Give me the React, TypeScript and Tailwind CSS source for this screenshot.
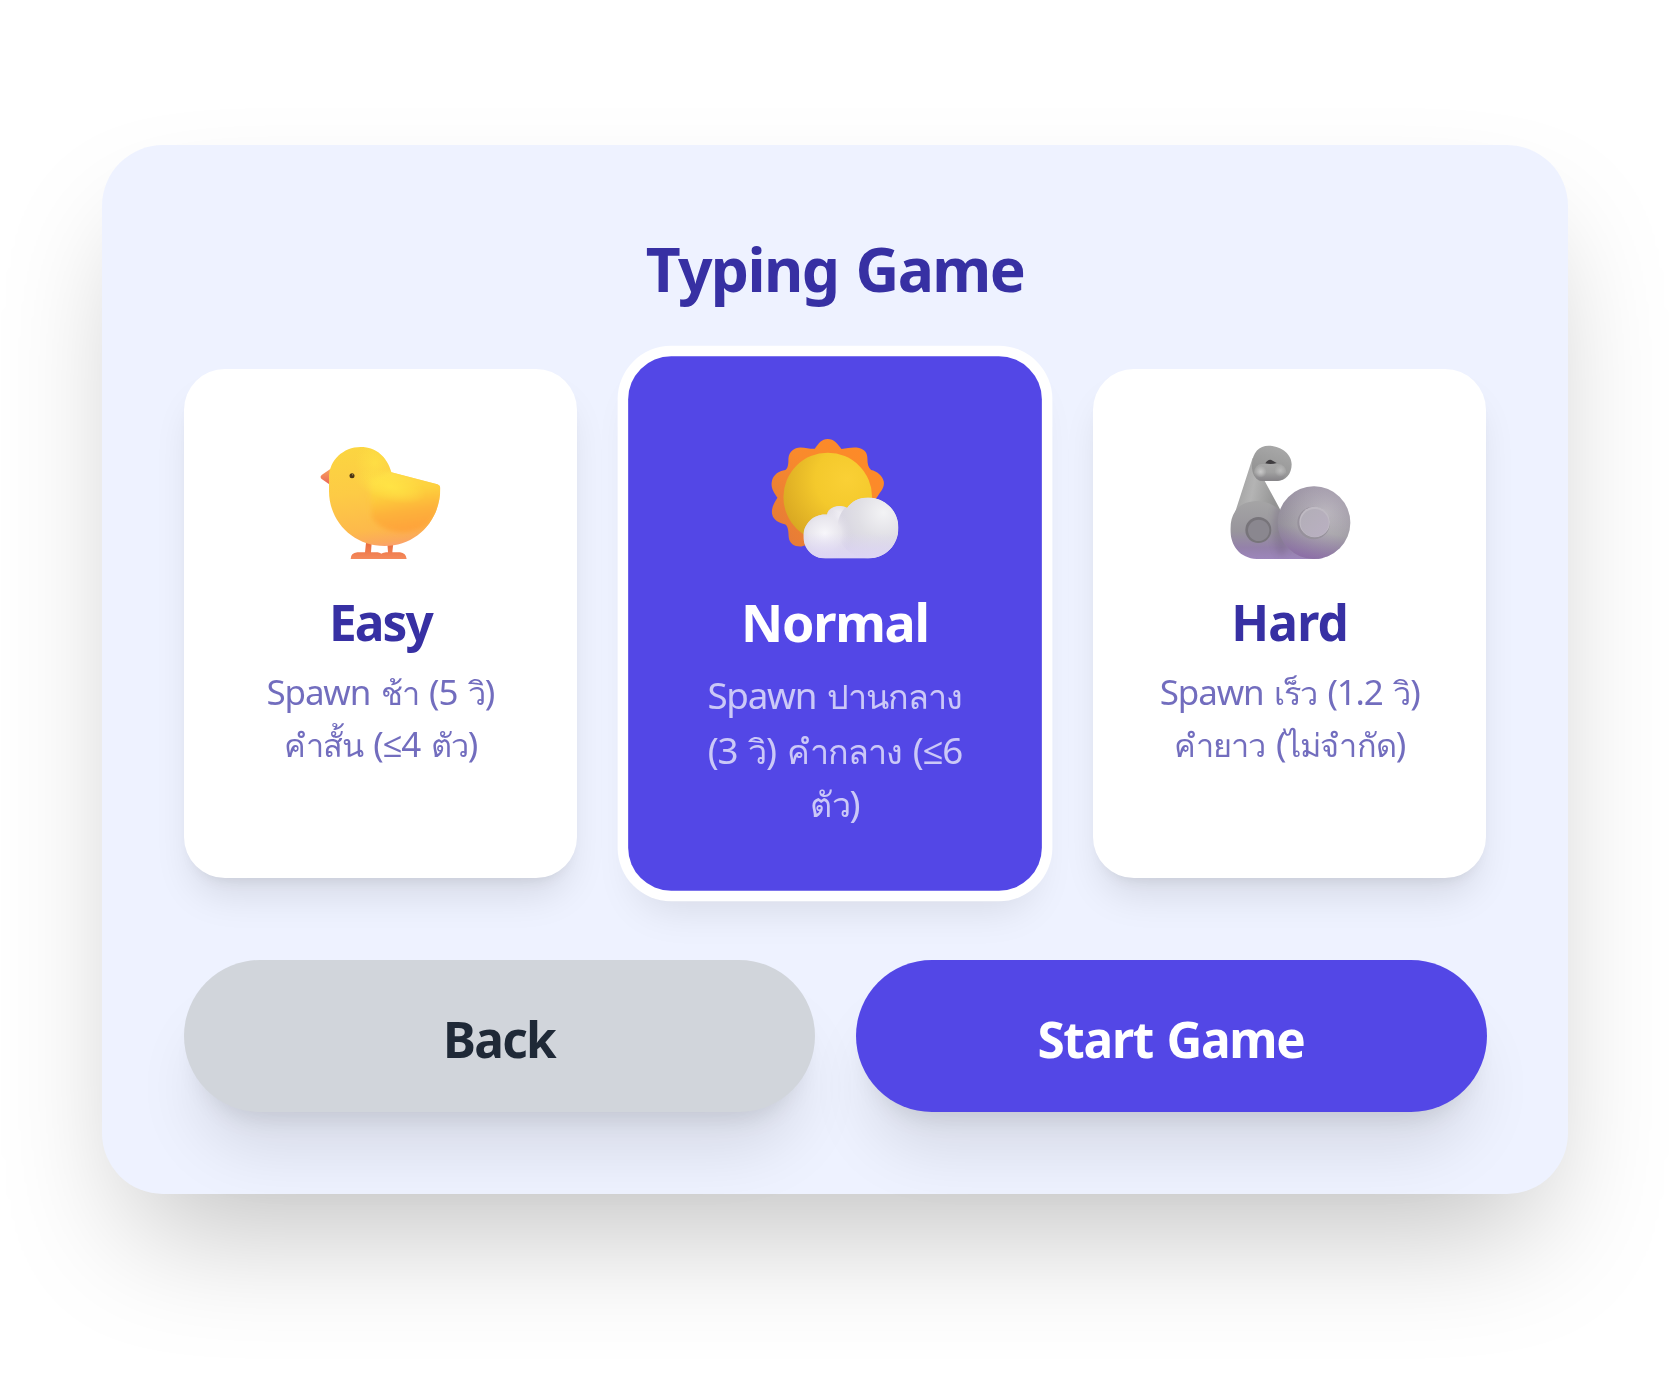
import React from "react";

const Chick = () => (
  <svg viewBox="0 0 480 480" className="block size-[160px]">
    <defs>
      <linearGradient id="ckBody" x1="0.35" y1="0" x2="0.5" y2="1">
        <stop offset="0" stopColor="#fbd640" />
        <stop offset="0.45" stopColor="#fdcb45" />
        <stop offset="0.8" stopColor="#fdb94b" />
        <stop offset="0.92" stopColor="#fba95c" />
        <stop offset="1" stopColor="#fb9a7c" />
      </linearGradient>
      <linearGradient id="ckWing" x1="0.4" y1="0" x2="0.58" y2="1">
        <stop offset="0" stopColor="#ffe14a" />
        <stop offset="0.35" stopColor="#fdd03c" />
        <stop offset="0.65" stopColor="#fdb23a" />
        <stop offset="1" stopColor="#fea03a" />
      </linearGradient>
      <radialGradient id="ckGlow">
        <stop offset="0" stopColor="#ffe345" />
        <stop offset="1" stopColor="#ffe345" stopOpacity="0" />
      </radialGradient>
      <linearGradient id="ckBeak" x1="0" y1="0" x2="0" y2="1">
        <stop offset="0" stopColor="#f9a05c" />
        <stop offset="1" stopColor="#e9675a" />
      </linearGradient>
      <linearGradient id="ckLeg" x1="0" y1="0" x2="0" y2="1">
        <stop offset="0" stopColor="#e96a3c" />
        <stop offset="1" stopColor="#f48a5c" />
      </linearGradient>
      <filter id="ckSoft" x="-20%" y="-20%" width="140%" height="140%">
        <feGaussianBlur stdDeviation="8" />
      </filter>
      <clipPath id="ckClip">
        <path d="M87 170C87 118 130 78 182 78C228 78 262 108 274 154L412 190Q421 193 421 202C421 300 348 375 254 375C160 375 87 302 87 210Z" />
      </clipPath>
    </defs>
    <path d="M92 143L66 161Q58 167 65 174L90 191Z" fill="url(#ckBeak)" />
    <path d="M198 365H215L213 394H233Q250 396 250 414H152Q152 396 172 394H195Z" fill="url(#ckLeg)" />
    <path d="M262 365H280L277 394H300Q318 396 320 414H234Q236 396 258 394H264Z" fill="url(#ckLeg)" />
    <g clipPath="url(#ckClip)">
      <rect x="60" y="60" width="380" height="330" fill="url(#ckBody)" />
      <path d="M215 290C240 335 320 345 370 320C410 300 425 250 425 190L270 150L210 180Z" fill="url(#ckWing)" filter="url(#ckSoft)" />
      <ellipse cx="270" cy="195" rx="110" ry="46" transform="rotate(16 270 195)" fill="url(#ckGlow)" />
      <ellipse cx="225" cy="125" rx="60" ry="70" fill="url(#ckGlow)" opacity="0.7" />
    </g>
    <circle cx="156" cy="164" r="7.5" fill="#4a3414" />
    <circle cx="158" cy="161" r="2.2" fill="#a58a45" />
  </svg>
);

const SunCloud = () => (
  <svg viewBox="0.75 -30.6 504 504" className="block size-[160px]">
    <defs>
      <linearGradient id="scRay" x1="1" y1="0" x2="0" y2="0.9">
        <stop offset="0" stopColor="#ff8a26" />
        <stop offset="0.5" stopColor="#f98a2c" />
        <stop offset="1" stopColor="#e47a38" />
      </linearGradient>
      <radialGradient id="scSun" cx="0.72" cy="0.3" r="0.8">
        <stop offset="0" stopColor="#fad035" />
        <stop offset="0.45" stopColor="#f4c92c" />
        <stop offset="1" stopColor="#d9a822" />
      </radialGradient>
      <radialGradient id="scLeft" cx="0.48" cy="0.42" r="0.6">
        <stop offset="0" stopColor="#f8f7fb" />
        <stop offset="0.6" stopColor="#e5e3ea" />
        <stop offset="1" stopColor="#dcd9e6" />
      </radialGradient>
      <radialGradient id="scRight" cx="0.75" cy="0.25" r="0.85">
        <stop offset="0" stopColor="#f3f3f5" />
        <stop offset="0.5" stopColor="#e0dfe5" />
        <stop offset="1" stopColor="#d4d1df" />
      </radialGradient>
      <linearGradient id="scBase" x1="0" y1="0" x2="0" y2="1">
        <stop offset="0.6" stopColor="#ddd6f5" stopOpacity="0" />
        <stop offset="1" stopColor="#ddd5f6" />
      </linearGradient>
      <radialGradient id="scLeftFade" gradientUnits="userSpaceOnUse" cx="222" cy="338" r="82">
        <stop offset="0" stopColor="#f8f7fb" />
        <stop offset="0.6" stopColor="#e9e7ee" stopOpacity="0.9" />
        <stop offset="1" stopColor="#dddae6" stopOpacity="0" />
      </radialGradient>
      <clipPath id="scCloud">
        <path d="M224 412C186 412 158 384 158 345C158 308 188 280 222 280L229 280C232 262 250 255 266 255Q280 254 289 261C302 241 326 229 352 229C403 229 443 270 443 320C443 372 405 412 352 412Z" />
      </clipPath>
    </defs>
    <path
      d="M192 83C204 67 212 54 231 54S260 68 272 84C292 82 306 77 325 81C344 86 350 98 350 114C350 128 352 139 361 147C378 151 395 163 399 181C402 199 389 212 378 229L300 330L152 376C131 377 116 367 114 349C113 332 113 318 104 310C84 305 68 298 64 279C61 261 70 246 80 230C69 214 60 201 63 183C67 160 84 151 104 147C113 139 113 126 113 112C115 91 130 80 149 79C166 79 178 84 192 83Z"
      fill="url(#scRay)"
    />
    <circle cx="231" cy="228" r="133" fill="url(#scSun)" />
    <g clipPath="url(#scCloud)">
      <rect x="150" y="220" width="300" height="200" fill="#dddbe3" />
      <circle cx="266" cy="294" r="39" fill="url(#scLeft)" />
      <circle cx="352" cy="320" r="92" fill="url(#scRight)" />
      <circle cx="224" cy="346" r="82" fill="url(#scLeftFade)" />
      <rect x="150" y="220" width="300" height="192" fill="url(#scBase)" />
    </g>
  </svg>
);

const Arm = () => (
  <svg viewBox="0 0 480 480" className="block size-[160px]">
    <defs>
      <linearGradient id="amFore" x1="0" y1="0" x2="1" y2="0.25">
        <stop offset="0" stopColor="#999" />
        <stop offset="0.5" stopColor="#b4b4b4" />
        <stop offset="1" stopColor="#939393" />
      </linearGradient>
      <linearGradient id="amElbow" x1="0" y1="0" x2="0" y2="1">
        <stop offset="0" stopColor="#a6a6a6" />
        <stop offset="0.55" stopColor="#98959c" />
        <stop offset="0.82" stopColor="#9481aa" />
        <stop offset="1" stopColor="#9d86bb" />
      </linearGradient>
      <radialGradient id="amBall" cx="0.66" cy="0.36" r="0.72">
        <stop offset="0" stopColor="#bebcbf" />
        <stop offset="0.5" stopColor="#a9a6ac" />
        <stop offset="1" stopColor="#908b97" />
      </radialGradient>
      <linearGradient id="amBallLow" x1="0.6" y1="0" x2="0.4" y2="1">
        <stop offset="0" stopColor="#9b7fb5" stopOpacity="0.2" />
        <stop offset="0.6" stopColor="#8d6fab" stopOpacity="0" />
        <stop offset="1" stopColor="#8a62ad" stopOpacity="0.75" />
      </linearGradient>
      <linearGradient id="amHand" x1="0.7" y1="0" x2="0.3" y2="1">
        <stop offset="0" stopColor="#a9a9a9" />
        <stop offset="1" stopColor="#8f8f8f" />
      </linearGradient>
      <linearGradient id="amFinger" x1="0" y1="0" x2="0" y2="1">
        <stop offset="0" stopColor="#a8a8a8" />
        <stop offset="0.5" stopColor="#a0a0a0" />
        <stop offset="1" stopColor="#858387" />
      </linearGradient>
      <radialGradient id="amShine">
        <stop offset="0" stopColor="#c9c9c9" />
        <stop offset="1" stopColor="#c9c9c9" stopOpacity="0" />
      </radialGradient>
      <linearGradient id="amHub" x1="0" y1="0" x2="1" y2="1">
        <stop offset="0" stopColor="#b2aeb7" />
        <stop offset="1" stopColor="#bab0c2" />
      </linearGradient>
      <filter id="amSoft" x="-50%" y="-50%" width="200%" height="200%">
        <feGaussianBlur stdDeviation="10" />
      </filter>
      <clipPath id="amLower">
        <path d="M76 270C92 246 120 240 145 240C172 242 195 252 210 270L270 300L340 411L326 414H140C90 412 61 375 61 325Q61 292 76 270Z" />
      </clipPath>
    </defs>
    <path d="M128 110L74 278L214 272L162 176Z" fill="url(#amFore)" />
    <path d="M126 128C128 94 148 73 178 74C216 76 245 100 245 130C245 160 226 180 202 180H150C132 172 124 152 126 128Z" fill="url(#amHand)" />
    <path d="M166 127Q174 114 184 117L200 126Q183 132 166 127Z" fill="#3f3d40" />
    <rect x="132" y="129" width="97" height="50" rx="25" fill="url(#amFinger)" />
    <circle cx="152" cy="152" r="18" fill="url(#amShine)" />
    <circle cx="211" cy="149" r="18" fill="url(#amShine)" opacity="0.65" />
    <g clipPath="url(#amLower)">
      <rect x="50" y="230" width="310" height="184" fill="url(#amElbow)" />
      <ellipse cx="214" cy="320" rx="24" ry="85" fill="#6b5a79" opacity="0.3" filter="url(#amSoft)" />
    </g>
    <circle cx="145" cy="327" r="39" fill="#77747a" />
    <circle cx="146" cy="328" r="32" fill="#8a878f" />
    <circle cx="312" cy="305" r="109" fill="url(#amBall)" />
    <circle cx="312" cy="305" r="109" fill="url(#amBallLow)" />
    <circle cx="311" cy="306" r="49" fill="#97919c" />
    <circle cx="314" cy="303" r="46" fill="#bfbac3" />
    <circle cx="314" cy="306" r="42" fill="url(#amHub)" />
  </svg>
);

type Level = {
  name: string;
  tracking: string;
  lines: string[];
  icon: React.ReactNode;
  active?: boolean;
};

const levels: Level[] = [
  { name: "Easy", tracking: "tracking-[-1.9px]", lines: ["Spawn ช้า (5 วิ)", "คำสั้น (≤4 ตัว)"], icon: <Chick /> },
  {
    name: "Normal",
    tracking: "tracking-[-1.2px]",
    lines: ["Spawn ปานกลาง", "(3 วิ) คำกลาง (≤6", "ตัว)"],
    icon: <SunCloud />,
    active: true,
  },
  { name: "Hard", tracking: "tracking-[-0.8px]", lines: ["Spawn เร็ว (1.2 วิ)", "คำยาว (ไม่จำกัด)"], icon: <Arm /> },
];

/* Thai runs are set slightly smaller than the Latin ones around them. */
const MixedLine = ({ text }: { text: string }) => (
  <span className="block h-[51.5px]">
    {text.split(/([\u0E00-\u0E7F]+)/).map((run, i) =>
      i % 2 ? (
        <span key={i} className="text-[32.5px] tracking-[-0.9px]">
          {run}
        </span>
      ) : (
        <span key={i}>{run}</span>
      ),
    )}
  </span>
);

const LevelCard = ({ level }: { level: Level }) => (
  <button
    className={
      "flex h-[509px] flex-col items-center justify-start rounded-[41px] pt-[51.5px] " +
      (level.active
        ? "scale-105 bg-[#5347e6] text-white shadow-[0_0_0_10px_#fff,0_25px_38px_-8px_rgba(0,0,0,0.1),0_10px_15px_-10px_rgba(0,0,0,0.1)]"
        : "bg-white text-[#3730a3] shadow-[0_25px_38px_-8px_rgba(0,0,0,0.1),0_10px_15px_-10px_rgba(0,0,0,0.1)]")
    }
  >
    {level.icon}
    <span className={"mt-[6px] text-[49.5px] leading-[71px] font-bold " + level.tracking}>{level.name}</span>
    <span className="mt-[8.5px] text-[35px] leading-[51px] tracking-[-1.2px] [word-spacing:2.5px] whitespace-nowrap opacity-70">
      {level.lines.map((line) => (
        <MixedLine key={line} text={line} />
      ))}
    </span>
  </button>
);

export default function App() {
  return (
    <div className="h-[1400px] w-[1680px] overflow-hidden bg-white pt-[145px] pl-[102px] font-['Noto_Sans','Open_Sans',sans-serif]">
      <main className="flex h-[1049px] w-[1466px] flex-col rounded-[61px] bg-[#eef2ff] px-[81.5px] pt-[82.5px] shadow-[0_64px_127px_-31px_rgba(0,0,0,0.25)]">
        <h1 className="text-center text-[60.5px] leading-[81.5px] font-bold tracking-[-1.6px] text-[#3730a3] [word-spacing:3px]">
          Typing Game
        </h1>
        <section className="mt-[60px] grid grid-cols-3 gap-[61px]">
          {levels.map((level) => (
            <LevelCard key={level.name} level={level} />
          ))}
        </section>
        <footer className="mt-[82px] grid grid-cols-2 gap-[41px] text-[49.5px] leading-[71px] font-bold">
          <button className="h-[152px] rounded-full bg-[#d1d5db] pt-[6px] tracking-[-1.7px] text-[#1f2937] shadow-[0_51px_64px_-13px_rgba(0,0,0,0.1),0_20px_25px_-15px_rgba(0,0,0,0.1)]">
            Back
          </button>
          <button className="h-[152px] rounded-full bg-[#5347e6] pt-[6px] tracking-[-1.3px] text-white shadow-[0_51px_64px_-13px_rgba(0,0,0,0.1),0_20px_25px_-15px_rgba(0,0,0,0.1)] [word-spacing:2px]">
            Start Game
          </button>
        </footer>
      </main>
    </div>
  );
}
